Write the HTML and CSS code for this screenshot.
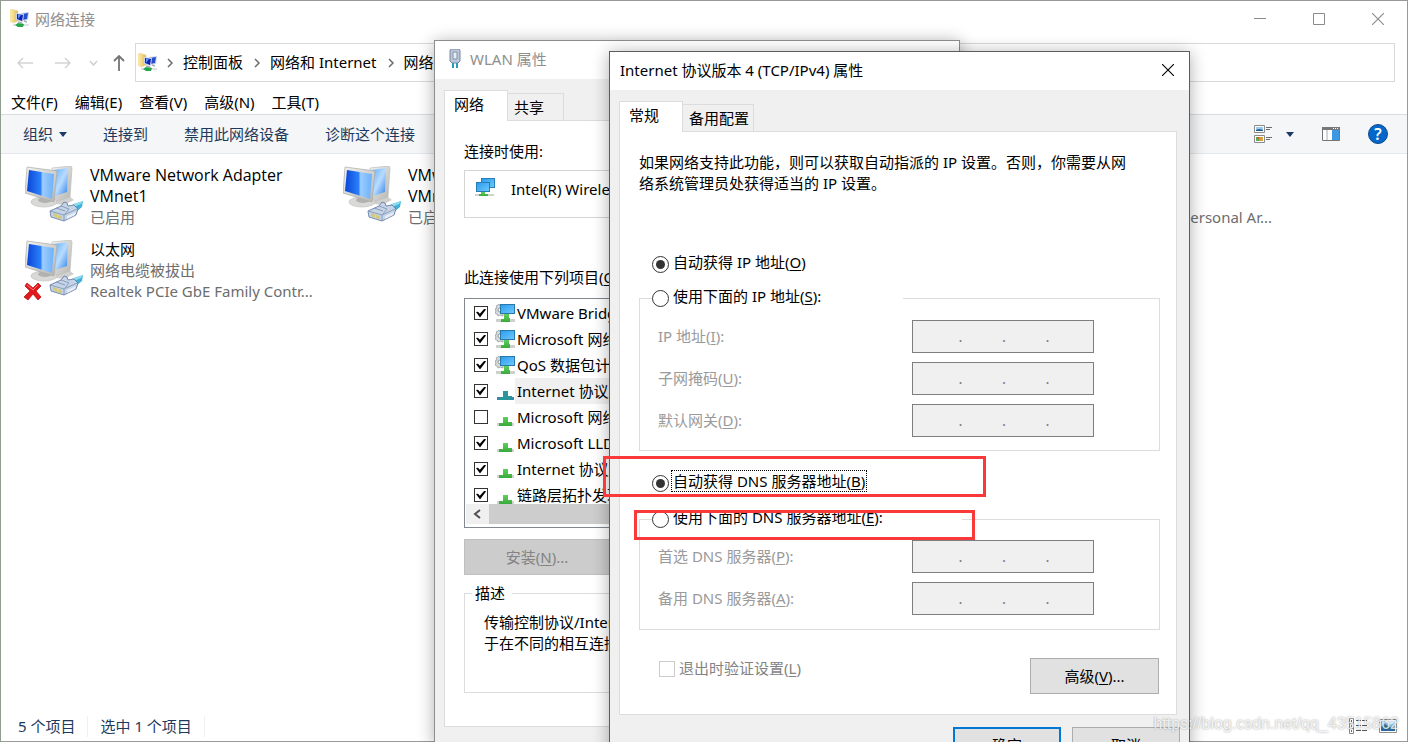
FILE: index.html
```html
<!DOCTYPE html>
<html lang="zh-CN">
<head>
<meta charset="utf-8">
<title>网络连接</title>
<link rel="stylesheet" href="styles.css">
</head>
<body>
<svg class="defs" aria-hidden="true">
  <defs>
    <linearGradient id="screen" x1="0" y1="0" x2="1" y2="0">
      <stop offset="0" stop-color="#0a45d8"/><stop offset=".5" stop-color="#2b80fa"/><stop offset=".58" stop-color="#9ccdff"/><stop offset="1" stop-color="#6cb0fa"/>
    </linearGradient>
    <linearGradient id="screenBack" x1="0" y1="0" x2="1" y2="1">
      <stop offset="0" stop-color="#5fadff"/><stop offset=".5" stop-color="#b9dcff"/><stop offset="1" stop-color="#2f80e8"/>
    </linearGradient>
    <linearGradient id="frame" x1="0" y1="0" x2="1" y2="1">
      <stop offset="0" stop-color="#f2f2f0"/><stop offset="1" stop-color="#b4b4b0"/>
    </linearGradient>
    <linearGradient id="sky" x1="0" y1="0" x2="1" y2="1">
      <stop offset="0" stop-color="#2d9df0"/><stop offset="1" stop-color="#6cc8fb"/>
    </linearGradient>
    <linearGradient id="folder" x1="0" y1="0" x2="1" y2="0">
      <stop offset="0" stop-color="#fff0b0"/><stop offset="1" stop-color="#e3bb55"/>
    </linearGradient>
    <linearGradient id="green" x1="0" y1="0" x2="0" y2="1">
      <stop offset="0" stop-color="#5fd05a"/><stop offset="1" stop-color="#3aa93d"/>
    </linearGradient>
    <symbol id="adapter" viewBox="0 0 60 58">
      <path d="M32 33l12-3 5 4-10 5-8-1z" fill="#d0d0ce"/>
      <path d="M27 2l19-2 1 2-2 29-16 5z" fill="url(#frame)" stroke="#bdbdba" stroke-width=".7"/>
      <path d="M29 4l14-2-1 24-12 4z" fill="url(#screenBack)"/>
      <path d="M17 31l8 2 1 4h-8z" fill="#aaa"/>
      <ellipse cx="19" cy="36" rx="13" ry="5" fill="#d9d9d7" stroke="#c2c2c0" stroke-width=".7"/>
      <ellipse cx="20" cy="34" rx="7" ry="3" fill="#b2b2b0"/>
      <path d="M2 1l30 4-3 31L0 27z" fill="url(#frame)" stroke="#aaa" stroke-width=".7"/>
      <path d="M4 4l25 4-2 25L2 25z" fill="url(#screen)"/>
      <path d="M47 39l11-4-1 6-6 5z" fill="#43b1d6"/>
      <path d="M48 38l10-3-2 3-7 3z" fill="#8edbee"/>
      <path d="M25 45l11-5 3-4 3 1 1 3 6-1 4 4-2 6-12 6-13-4z" fill="#c6d4e8" stroke="#6980a5" stroke-width=".9"/>
      <path d="M25 45l14 4 13-6M39 49v6M36 40l8 3-4 5M31 42l9 3" fill="none" stroke="#8297b6" stroke-width=".9"/>
      <path d="M28 47l4 1v4l-4-2zm5 2l4 1v4l-4-2z" fill="#d3ca7d"/>
      <path d="M42 50l9-4-1 3-8 4z" fill="#e6edf7"/>
    </symbol>
    <symbol id="netfolder" viewBox="0 0 20 20">
      <path d="M0 1l3-1 1 1 4 1v10l-5 2-3-2z" fill="url(#folder)" stroke="#dfc780" stroke-width=".4"/>
      <path d="M11 4l8-1-1 8-6 1z" fill="#c8d2e8"/>
      <path d="M12 5l6-1-1 6-5 1z" fill="#234fcd"/>
      <path d="M6 4l8 1-1 8-7-2z" fill="#ccd5ec"/>
      <path d="M7 5l6 1-1 6-5-2z" fill="#1022ba"/>
      <path d="M8 5l3 1-3 4z" fill="#6592f1"/>
      <path d="M8 13l4 1M14 12l3 1" stroke="#a8afba" stroke-width="1.400"/>
      <path d="M3 16l16 0M12 14l1 3" stroke="#c0cac2" stroke-width="1.200"/>
      <path d="M5 16l3-2 6 1-1 3-5 0z" fill="#25a64b"/>
    </symbol>
    <symbol id="monitors" viewBox="0 0 20 20">
      <path d="M6 1h14v10H6z" fill="#2980b8"/><path d="M7 2h12v8H7z" fill="url(#sky)"/>
      <path d="M1 5h14v10H1z" fill="#287cb2"/><path d="M2 6h12v8H2z" fill="url(#sky)"/>
      <path d="M0 17h19v2H0z" fill="#cdd3cd"/><path d="M6 15h4v2h3v2H4v-2h2z" fill="url(#green)"/>
    </symbol>
    <symbol id="service" viewBox="0 0 20 20">
      <path d="M4 1l1 2 2-1 1 2v9l-3-1-2 1-1-2-2-1 1-2-1-2 2-1-1-2 2-1z" fill="#d8dcdd" stroke="#929a9e" stroke-width=".8"/>
      <circle cx="5" cy="7" r="2" fill="#fff" stroke="#8c9599"/>
      <path d="M5 1h15v10H5z" fill="#2878aa"/><path d="M6 2h13v8H6z" fill="url(#sky)"/>
      <path d="M1 16h19v3H1z" fill="#cdd1cd"/><path d="M9 11h5v4h1v4H6v-3h3z" fill="url(#green)"/>
    </symbol>
    <symbol id="protocol" viewBox="0 0 20 20">
      <path d="M2 16h17v3H2z" fill="#cfd4cf"/><path d="M8 10h5v5h4v4H4v-3h4z" fill="url(#green)"/>
    </symbol>
    <symbol id="protocolOn" viewBox="0 0 20 20">
      <path d="M2 16h17v3H2z" fill="#3589b1"/><path d="M8 10h5v5h4v4H4v-3h4z" fill="#2c959b"/>
    </symbol>
    <symbol id="close" viewBox="0 0 12 12"><path d="M0 0l12 12M12 0L0 12" fill="none" stroke="currentColor" stroke-width="1.100"/></symbol>
    <symbol id="chevron" viewBox="0 0 6 10"><path d="M1 1l4 4-4 4" fill="none" stroke="#6a6a6a" stroke-width="1.500"/></symbol>
  </defs>
</svg>

<main class="explorer">
  <header class="titlebar">
    <svg class="icon20"><use href="#netfolder"/></svg>
    <h1 class="caption muted">网络连接</h1>
    <div class="window-buttons">
      <button><svg width="12" height="12"><path d="M0 5.500h12" stroke="#8a8a8a"/></svg></button>
      <button><svg width="12" height="12"><path d="M.5.500h11v11H.500z" fill="none" stroke="#8a8a8a"/></svg></button>
      <button><svg width="12" height="12"><use href="#close"/></svg></button>
    </div>
  </header>

  <nav class="navbar">
    <div class="nav-buttons">
      <button><svg width="16" height="12"><path d="M1 6h15M6 1L1 6l5 5" fill="none" stroke="#d3d3d3" stroke-width="1.500"/></svg></button>
      <button><svg width="16" height="12"><path d="M0 6h15M10 1l5 5-5 5" fill="none" stroke="#d3d3d3" stroke-width="1.500"/></svg></button>
      <button><svg width="9" height="6"><path d="M1 1l3.500 4L8 1" fill="none" stroke="#cfcfcf" stroke-width="1.500"/></svg></button>
      <button><svg width="12" height="16"><path d="M6 16V1M1 6l5-5 5 5" fill="none" stroke="#747474" stroke-width="1.800"/></svg></button>
    </div>
    <div class="address">
      <svg class="icon20"><use href="#netfolder"/></svg>
      <svg class="chev"><use href="#chevron"/></svg>
      <a href="#">控制面板</a>
      <svg class="chev"><use href="#chevron"/></svg>
      <a href="#">网络和 Internet</a>
      <svg class="chev"><use href="#chevron"/></svg>
      <a href="#">网络连接</a>
    </div>
  </nav>

  <nav class="menubar">
    <button>文件(F)</button><button>编辑(E)</button><button>查看(V)</button><button>高级(N)</button><button>工具(T)</button>
  </nav>

  <div class="toolbar">
    <button>组织 <svg width="8" height="5"><path d="M0 0h8L4 5z" fill="#1c3a66"/></svg></button>
    <button>连接到</button>
    <button>禁用此网络设备</button>
    <button>诊断这个连接</button>
    <div class="view-tools">
      <button><svg width="18" height="20"><path d="M.5 1.500h10v7H.500zM.500 11.500h10v7H.500z" fill="#fff" stroke="#8b8b8b"/><path d="M2 3h7v4H2z" fill="#9cc9ee"/><path d="M2 6l3-1 4 1v1H2z" fill="#1f5c8c"/><path d="M2 13h7v4H2z" fill="#65a953"/><path d="M6 13h3v4H5z" fill="#d8a03e"/><path d="M3 13h2v2H3z" fill="#cf5b3e"/><path d="M12 3.500h6M12 5.500h4M12 13.500h6M12 15.500h4" stroke="#6c6c6c"/></svg></button>
      <button><svg width="8" height="5"><path d="M0 0h8L4 5z" fill="#1c3a66"/></svg></button>
      <button><svg width="18" height="14"><path d="M.5.500h17v13H.500z" fill="#fff" stroke="#747474"/><path d="M0 0h18v3H0z" fill="#777"/><path d="M11 1h1v1h-1zm2 0h1v1h-1zm2 0h1v1h-1z" fill="#fff"/><path d="M5 3v10" stroke="#aaa"/><path d="M10 3h7v10h-7z" fill="#3d98e3"/></svg></button>
      <button class="help">?</button>
    </div>
  </div>

  <ul class="connections">
    <li class="connection">
      <svg class="adapter"><use href="#adapter"/></svg>
      <div><p class="device-name">VMware Network Adapter</p><p class="device-name">VMnet1</p><p class="sub">已启用</p></div>
    </li>
    <li class="connection">
      <svg class="adapter"><use href="#adapter"/></svg>
      <div><p class="device-name">VMware Network Adapter</p><p class="device-name">VMnet8</p><p class="sub">已启用</p></div>
    </li>
    <li class="connection last">
      <div><p class="sub">Bluetooth Device (Personal Ar...</p></div>
    </li>
    <li class="connection">
      <svg class="adapter"><use href="#adapter"/></svg>
      <svg class="cross" viewBox="0 0 18 18"><path d="M3 1l6 5 5-5 3 3-5 5 5 6-3 3-5-6-5 6-4-3 6-6-5-5z" fill="#e3181b" stroke="#b51a1c" stroke-width=".8"/><path d="M3 3l6 5 5-5" fill="none" stroke="#fa7b7c"/></svg>
      <div><p>以太网</p><p class="sub">网络电缆被拔出</p><p class="sub">Realtek PCIe GbE Family Contr...</p></div>
    </li>
  </ul>

  <footer class="statusbar">
    <span>5 个项目</span><span>选中 1 个项目</span>
    <div class="status-views">
      <svg width="18" height="16"><path d="M.5.500h4v15h-4zM.500 5.500h4M.500 10.500h4" fill="#fff" stroke="#888"/><path d="M2 2h1v2H2z" fill="#2878c8"/><path d="M2 7h1v2H2z" fill="#7ca53e"/><path d="M2 12h1v2H2z" fill="#d04828"/><path d="M7 2.500h5m1 0h5M7 7.500h5m1 0h5M7 12.500h5m1 0h5" stroke="#555"/></svg>
      <svg width="18" height="14"><path d="M.5.500h17v13H.500z" fill="#fff" stroke="#8f8f8f"/><path d="M2 2h14v10H2z" fill="#8ec3f0"/><path d="M2 8l4-3 4 3 6 1v3H2z" fill="#2f7791"/><path d="M2 10l14 1v1H2z" fill="#2c67ab"/><path d="M7 4l4 2 5-2v-2H7z" fill="#d4ebfc"/></svg>
    </div>
  </footer>
</main>

<section class="dialog wlan">
  <header class="dialog-title">
    <svg class="plug" viewBox="0 0 12 20"><path d="M1 2q0-2 2-2h6q2 0 2 2v10l-2 2H3l-2-2z" fill="#bcc9da" stroke="#75869d"/><path d="M4 3h4v7H4z" fill="#e8eef5" stroke="#8292a8"/><path d="M3 14h2v5H3zm4 0h2v5H7z" fill="#2c98c5"/></svg>
    <h2 class="caption muted">WLAN 属性</h2>
  </header>
  <div class="dialog-body">
    <div class="tabs"><button class="tab active">网络</button><button class="tab">共享</button></div>
    <div class="panel">
      <p class="line">连接时使用:</p>
      <div class="device"><svg class="icon20"><use href="#monitors"/></svg><span>Intel(R) Wireless</span></div>
      <p class="line items-label">此连接使用下列项目(<u>O</u>):</p>
      <div class="listbox">
        <ul class="items">
          <li><label><input type="checkbox" class="check" checked><svg class="icon20"><use href="#service"/></svg><span>VMware Bridge Protocol</span></label></li>
          <li><label><input type="checkbox" class="check" checked><svg class="icon20"><use href="#service"/></svg><span>Microsoft 网络客户端</span></label></li>
          <li><label><input type="checkbox" class="check" checked><svg class="icon20"><use href="#service"/></svg><span>QoS 数据包计划程序</span></label></li>
          <li><label><input type="checkbox" class="check" checked><svg class="icon20"><use href="#protocolOn"/></svg><span class="selected">Internet 协议版本 4</span></label></li>
          <li><label><input type="checkbox" class="check"><svg class="icon20"><use href="#protocol"/></svg><span>Microsoft 网络适配器</span></label></li>
          <li><label><input type="checkbox" class="check" checked><svg class="icon20"><use href="#protocol"/></svg><span>Microsoft LLDP</span></label></li>
          <li><label><input type="checkbox" class="check" checked><svg class="icon20"><use href="#protocol"/></svg><span>Internet 协议版本 6</span></label></li>
          <li><label><input type="checkbox" class="check" checked><svg class="icon20"><use href="#protocol"/></svg><span>链路层拓扑发现</span></label></li>
        </ul>
        <div class="scrollbar"><svg width="8" height="10"><path d="M7 1L2 5l5 4" fill="none" stroke="#505050" stroke-width="2"/></svg><div class="thumb"></div></div>
      </div>
      <button class="button install" disabled>安装(<u>N</u>)...</button>
      <fieldset class="group about">
        <legend>描述</legend>
        <p>传输控制协议/Internet 协议。</p>
        <p>于在不同的相互连接的网络</p>
      </fieldset>
    </div>
  </div>
</section>

<section class="dialog tcpip">
  <header class="dialog-title">
    <h2 class="caption">Internet 协议版本 4 (TCP/IPv4) 属性</h2>
    <button class="close"><svg width="12" height="12"><use href="#close"/></svg></button>
  </header>
  <div class="dialog-body">
    <div class="tabs"><button class="tab active">常规</button><button class="tab">备用配置</button></div>
    <div class="panel">
      <p class="intro">如果网络支持此功能，则可以获取自动指派的 IP 设置。否则，你需要从网络系统管理员处获得适当的 IP 设置。</p>
      <label class="option"><input type="radio" class="radio" name="ip" checked><span>自动获得 IP 地址(<u>O</u>)</span></label>
      <fieldset class="group ip-group">
        <legend><label class="option"><input type="radio" class="radio" name="ip"><span>使用下面的 IP 地址(<u>S</u>):</span></label></legend>
        <div class="field"><label for="ip1" id="l1">IP 地址(<u>I</u>):</label><div class="ip"><input id="ip1" disabled>.<input aria-labelledby="l1" disabled>.<input aria-labelledby="l1" disabled>.<input aria-labelledby="l1" disabled></div></div>
        <div class="field"><label for="ip2" id="l2">子网掩码(<u>U</u>):</label><div class="ip"><input id="ip2" disabled>.<input aria-labelledby="l2" disabled>.<input aria-labelledby="l2" disabled>.<input aria-labelledby="l2" disabled></div></div>
        <div class="field"><label for="ip3" id="l3">默认网关(<u>D</u>):</label><div class="ip"><input id="ip3" disabled>.<input aria-labelledby="l3" disabled>.<input aria-labelledby="l3" disabled>.<input aria-labelledby="l3" disabled></div></div>
      </fieldset>
      <label class="option dns-auto"><input type="radio" class="radio" name="dns" checked><span class="focused">自动获得 DNS 服务器地址(<u>B</u>)</span></label>
      <fieldset class="group dns-group">
        <legend><label class="option"><input type="radio" class="radio" name="dns"><span>使用下面的 DNS 服务器地址(<u>E</u>):</span></label></legend>
        <div class="field"><label for="ip4" id="l4">首选 DNS 服务器(<u>P</u>):</label><div class="ip"><input id="ip4" disabled>.<input aria-labelledby="l4" disabled>.<input aria-labelledby="l4" disabled>.<input aria-labelledby="l4" disabled></div></div>
        <div class="field"><label for="ip5" id="l5">备用 DNS 服务器(<u>A</u>):</label><div class="ip"><input id="ip5" disabled>.<input aria-labelledby="l5" disabled>.<input aria-labelledby="l5" disabled>.<input aria-labelledby="l5" disabled></div></div>
      </fieldset>
      <div class="panel-foot">
        <label class="validate"><input type="checkbox" class="check" disabled><span>退出时验证设置(<u>L</u>)</span></label>
        <button class="button advanced">高级(<u>V</u>)...</button>
      </div>
    </div>
    <div class="actions"><button class="button primary">确定</button><button class="button">取消</button></div>
  </div>
</section>

<div class="mark mark-auto"></div>
<div class="mark mark-manual"></div>
<p class="watermark">https://blog.csdn.net/qq_43515862</p>
</body>
</html>
```
FILE: styles.css
```css
* { box-sizing: border-box; }
body {
  margin: 0;
  height: 100vh;
  overflow: hidden;
  position: relative;
  background: #fff;
  color: #000;
  font: 15px/21px "Noto Sans", "Noto Sans CJK SC", sans-serif;
}
button, input { font: inherit; color: inherit; }
button { border: 0; padding: 0; background: none; }
svg { display: block; flex: none; }
p, h1, h2, ul, fieldset { margin: 0; padding: 0; }
ul { list-style: none; }
a { color: inherit; text-decoration: none; }
u { text-underline-offset: 2px; }
.defs { position: absolute; width: 0; height: 0; }
.icon20 { width: 20px; height: 20px; }
.caption { font-size: 15px; font-weight: 400; white-space: nowrap; }
.muted { color: #8f8f8f; }

/* Explorer window */
.explorer {
  height: 100%;
  display: flex;
  flex-direction: column;
  border: 1px solid #999;
  border-left-color: #8f9d8f;
}
.titlebar { display: flex; align-items: center; gap: 5px; height: 36px; padding-left: 9px; }
.window-buttons { margin-left: auto; display: flex; color: #8a8a8a; }
.window-buttons button { width: 59px; height: 36px; display: grid; place-items: center; }
.navbar { display: flex; align-items: center; margin-top: 6px; padding-right: 12px; }
.nav-buttons { display: flex; align-items: center; width: 134px; gap: 22px; padding-left: 16px; flex: none; }
.nav-buttons button:nth-child(3) { margin-left: -4px; }
.nav-buttons button:nth-child(4) { margin-left: -7px; }
.address { flex: 1; display: flex; align-items: center; height: 39px; border: 1px solid #d9d9d9; padding-left: 2px; white-space: nowrap; }
.address a { margin: 0 11px 0 10px; }
.chev { width: 6px; height: 10px; }
.address .icon20 + .chev { margin-left: 9px; }
.menubar { display: flex; gap: 17px; padding: 10px 10px 1px; }
.toolbar {
  display: flex;
  align-items: center;
  gap: 36px;
  height: 40px;
  padding: 0 19px 0 22px;
  background: #f5f6f7;
  border-top: 1px solid #dadbdc;
  border-bottom: 1px solid #e4e7ec;
  color: #1e395b;
}
.toolbar button { display: flex; align-items: center; gap: 6px; }
.view-tools { margin-left: auto; display: flex; align-items: center; }
.view-tools button:nth-child(2) { margin: 0 28px 0 14px; }
.view-tools .help { margin-left: 28px; width: 20px; height: 20px; border-radius: 50%; border: 1px solid #0b4b8e; background: #0567c9; color: #fff; justify-content: center; font-size: 16px; font-weight: 600; }
.connections { flex: 1; display: grid; grid-template-columns: repeat(4, 318px); grid-auto-rows: 74px; padding: 11px 0 0 24px; }
.connection { position: relative; display: flex; gap: 5px; height: 63px; white-space: nowrap; }
.connection.last { grid-column: 4; align-items: flex-end; padding-left: 74px; }
.device-name { font: 16px/21px "Open Sans", sans-serif; }
.adapter { width: 60px; height: 58px; margin-top: 1px; }
.cross { position: absolute; left: -1px; top: 43px; width: 18px; height: 18px; }
.sub { color: #6d6d6d; }
.statusbar { display: flex; align-items: center; height: 30px; padding: 0 10px 0 5px; color: #1e395b; }
.statusbar span { padding: 0 12px; border-right: 1px solid #f0f0f0; }
.status-views { margin-left: auto; display: flex; align-items: center; gap: 12px; }

/* Dialogs */
.dialog { position: absolute; background: #f0f0f0; border: 1px solid #8d8d8d; box-shadow: 0 2px 16px rgba(0, 0, 0, .32); }
.wlan { left: 434px; top: 40px; bottom: -2px; width: 526px; }
.tcpip { left: 609px; top: 51px; width: 581px; border-color: #5c5c5c; }
.dialog-title { display: flex; align-items: center; height: 38px; padding: 0 15px 2px 10px; background: #fff; }
.close { margin-left: auto; }
.plug { width: 12px; height: 20px; margin: 0 9px 0 4px; }
.dialog-body { padding: 11px 12px 11px 9px; }
.tabs { display: flex; align-items: flex-end; }
.tab { height: 27px; padding: 0 19px 0 6px; border: 1px solid #dcdcdc; border-bottom: 0; border-left: 0; }
.tab.active { height: 31px; padding: 0 23px 4px 9px; margin-bottom: -1px; border-left: 1px solid #dcdcdc; background: #fff; z-index: 1; }
.tcpip .tab:not(.active) { padding-right: 4px; }
.panel { background: #fff; border: 1px solid #dcdcdc; }
.wlan .panel { padding: 20px 18px 33px 19px; }
.tcpip .panel { padding: 20px 16px 20px 19px; }
.device { display: flex; align-items: flex-start; gap: 16px; height: 48px; margin-top: 8px; padding: 6px 10px; border: 1px solid #d5d5d5; white-space: nowrap; }
.device span { padding-top: 2px; }
.items-label { margin: 49px 0 10px; }
.listbox { border: 1px solid #828790; padding: 1px; }
.items { height: 204px; overflow: hidden; }
.items label { display: flex; align-items: center; height: 26px; padding-left: 8px; white-space: nowrap; }
.items .icon20 { margin-left: 7px; }
.items span { line-height: 26px; padding-left: 2px; }
.items span.selected { flex: 1; background: #f0f0f0; }
.check { appearance: none; flex: none; width: 14px; height: 14px; margin: 0; border: 1px solid #333; background: #fff; display: grid; place-items: center; }
.check:checked::after { content: ""; width: 10px; height: 9px; background: #000; clip-path: polygon(0 40%, 20% 35%, 38% 58%, 85% 0, 100% 12%, 40% 100%); }
.check:disabled { border-color: #ccc; width: 16px; height: 16px; }
.scrollbar { display: flex; align-items: center; height: 20px; margin-bottom: 2px; padding-left: 7px; background: #f0f0f0; }
.thumb { flex: 1; height: 20px; margin-left: 8px; background: #cdcdcd; }
.button { border: 1px solid #adadad; background: #e1e1e1; height: 36px; }
.button:disabled { border-color: #bfbfbf; background: #ccc; color: #838383; }
.install { display: block; width: 146px; margin-top: 11px; }
.group { border: 1px solid #dcdcdc; min-width: 0; }
.about { margin-top: 8px; padding: 8px 19px 38px; }
.about legend { padding: 0 7px 0 3px; margin-left: -12px; }
.intro { min-height: 42px; padding-right: 24px; }
.option { display: flex; align-items: center; gap: 4px; height: 24px; line-height: 18px; }
.option span { margin-bottom: 4px; }
.intro + .option { margin: 58px 0 10px 13px; }
.radio { appearance: none; flex: none; width: 17px; height: 17px; margin: 0; border: 1px solid #333; border-radius: 50%; background: #fff; display: grid; place-items: center; }
.radio:checked::after { content: ""; width: 9px; height: 9px; border-radius: 50%; background: #333; }
.tcpip legend { margin-left: 12px; padding: 0; height: 24px; }
.ip-group legend { width: 251px; }
.dns-group legend { width: 310px; }
.ip-group { padding: 1px 0 13px; }
.dns-group { padding-bottom: 14px; }
.field { display: flex; align-items: center; justify-content: space-between; margin: 9px 65px 0 18px; color: #9a9a9a; }
.ip { display: flex; align-items: center; width: 182px; height: 33px; border: 1px solid #7e7e7e; background: #f0f0f0; padding: 0 4px 0 6px; color: #7a7a7a; }
.ip input { flex: 1; min-width: 0; width: 0; border: 0; padding: 0; background: none; text-align: center; }
.dns-auto { margin: 20px 0 12px 13px; }
.focused { outline: 1px dotted #000; outline-offset: 1px; }
.panel-foot { display: flex; justify-content: space-between; align-items: flex-start; margin-top: 28px; padding-right: 1px; }
.validate { display: flex; align-items: center; gap: 4px; margin-left: 20px; color: #838383; }
.advanced { width: 129px; }
.actions { display: flex; justify-content: flex-end; gap: 11px; margin-top: 12px; margin-right: -3px; }
.actions .button { width: 108px; }
.actions .primary { border: 2px solid #0078d7; }

/* Highlights and overlay text */
.mark { position: absolute; border: 3px solid #fa3a3a; }
.mark-auto { left: 603px; top: 456px; width: 383px; height: 41px; }
.mark-manual { left: 634px; top: 510px; width: 341px; height: 30px; }
.watermark { position: absolute; right: 9px; bottom: 8px; color: rgba(255, 255, 255, .8); text-shadow: 0 0 2px rgba(0, 0, 0, .4); font: 16px/20px "Liberation Sans", sans-serif; }
```
